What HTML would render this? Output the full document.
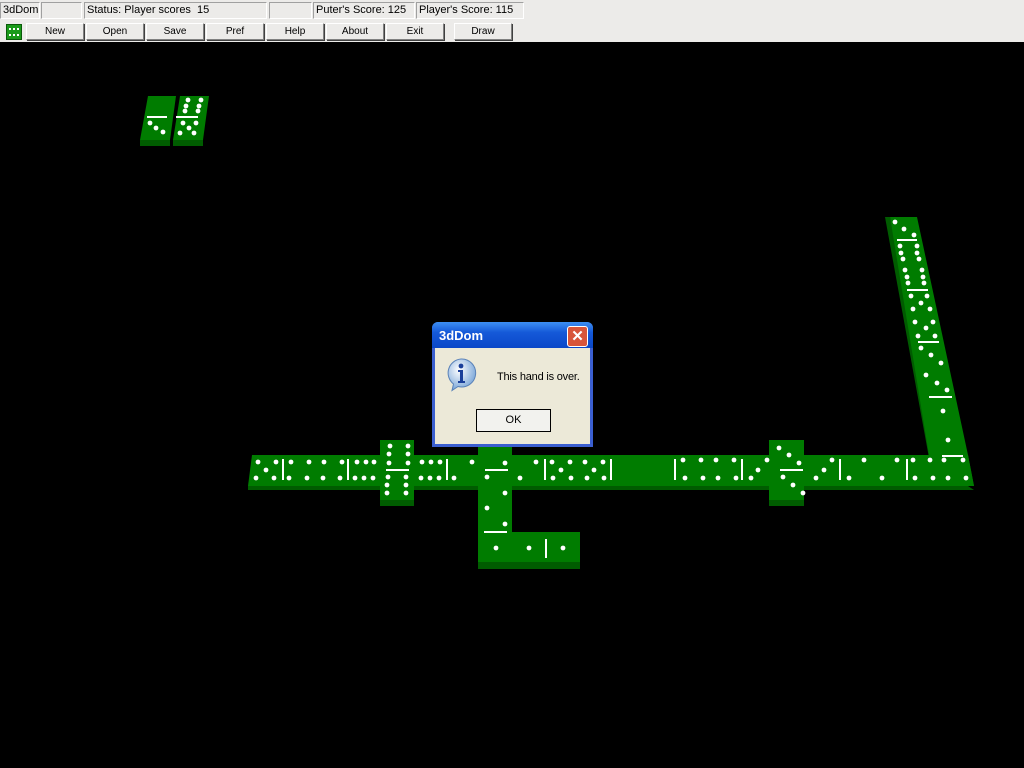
<!DOCTYPE html>
<html><head><meta charset="utf-8"><style>
*{margin:0;padding:0;box-sizing:border-box}
body{width:1024px;height:768px;background:#000;position:relative;overflow:hidden;font-family:"Liberation Sans",sans-serif;font-size:11px}
#top{position:absolute;left:0;top:0;width:1024px;height:42px;background:#ecebe9}
.f{position:absolute;top:2px;height:17px;border:1px solid #fff;border-top-color:#a0a0a0;border-left-color:#a0a0a0;line-height:15px;padding-left:2px;color:#000;white-space:nowrap}
.b{position:absolute;top:23px;height:17px;width:58px;background:#ecebe9;border:1px solid #fff;border-right-color:#808080;border-bottom-color:#808080;box-shadow:1px 1px 0 #404040;text-align:center;line-height:15px;font-size:10px}
#dlg{position:absolute;left:432px;top:322px;width:161px;height:125px;background:#3b5fd0;border-radius:6px 6px 0 0}
#dlg .t{position:absolute;left:0;top:0;width:161px;height:26px;background:linear-gradient(#3d8ff2,#1559d8 40%,#0a47c8);border-radius:6px 6px 0 0;color:#fff;font-weight:bold;font-size:13px;line-height:28px;padding-left:7px}
#dlg .x{position:absolute;right:5px;top:4px;width:21px;height:21px;background:#d8553a;border:1px solid #fff;border-radius:3px;color:#fff;text-align:center;line-height:19px;font-size:15px;font-weight:bold}
#dlg .c{position:absolute;left:3px;top:26px;width:155px;height:96px;background:#ece9d8}
#dlg .m{position:absolute;left:62px;top:23px;font-size:11px;letter-spacing:-0.2px}
#dlg .ok{position:absolute;left:41px;top:61px;width:75px;height:23px;border:1px solid #000;background:#f2f2ee;text-align:center;line-height:21px;font-size:11px}
svg circle{r:2.4px}
</style></head><body>
<div id="top">
<div class="f" style="left:0;width:40px">3dDom</div>
<div class="f" style="left:41px;width:41px"></div>
<div class="f" style="left:84px;width:183px">Status: Player scores&nbsp; 15</div>
<div class="f" style="left:269px;width:43px"></div>
<div class="f" style="left:313px;width:102px">Puter's Score: 125</div>
<div class="f" style="left:416px;width:108px">Player's Score: 115</div>
<div style="position:absolute;left:6px;top:24px;width:16px;height:16px;background:#1a9a1a;border:1px solid #0a5a0a">
<svg width="14" height="14" style="display:block"><g fill="#fff"><rect x="2" y="3" width="2" height="2"/><rect x="6" y="3" width="2" height="2"/><rect x="10" y="3" width="2" height="2"/><rect x="2" y="9" width="2" height="2"/><rect x="6" y="9" width="2" height="2"/><rect x="10" y="9" width="2" height="2"/></g></svg></div>
<div class="b" style="left:26px">New</div>
<div class="b" style="left:86px">Open</div>
<div class="b" style="left:146px">Save</div>
<div class="b" style="left:206px">Pref</div>
<div class="b" style="left:266px">Help</div>
<div class="b" style="left:326px">About</div>
<div class="b" style="left:386px">Exit</div>
<div class="b" style="left:454px">Draw</div>
</div>
<svg width="1024" height="768" style="position:absolute;left:0;top:0">
<g fill="#005c00">
<polygon points="140,140 170,140 170,146 140,146"/>
<polygon points="173,140 203,140 203,146 173,146"/>
<polygon points="248,486 968,486 974,490 248,490"/>
<polygon points="885,217 890,217 933,455 929,458"/>
<polygon points="380,500 414,500 414,506 380,506"/>
<polygon points="769,500 804,500 804,506 769,506"/>
<polygon points="478,562 580,562 580,569 478,569"/>
</g>
<g fill="#007c00">
<polygon points="148,96 176,96 170,140 140,140"/>
<polygon points="180,96 209,96 203,140 173,140"/>
<polygon points="252,455 968,455 974,486 248,486"/>
<polygon points="890,217 917,217 968,455 974,486 930,486 929,455"/>
<rect x="380" y="440" width="34" height="60"/>
<rect x="769" y="440" width="35" height="60"/>
<rect x="478" y="446" width="34" height="116"/>
<rect x="478" y="532" width="102" height="30"/>
</g>
<g fill="#fff">
<rect x="147" y="116" width="20" height="2"/><rect x="176" y="116" width="22" height="2"/>
<rect x="282" y="459" width="2" height="21"/><rect x="347" y="459" width="2" height="21"/>
<rect x="446" y="459" width="2" height="21"/><rect x="544" y="459" width="2" height="21"/><rect x="610" y="459" width="2" height="21"/>
<rect x="674" y="459" width="2" height="21"/><rect x="741" y="459" width="2" height="21"/><rect x="839" y="459" width="2" height="21"/><rect x="906" y="459" width="2" height="21"/>
<rect x="386" y="469" width="23" height="2"/><rect x="780" y="469" width="23" height="2"/>
<rect x="485" y="469" width="23" height="2"/><rect x="484" y="531" width="23" height="2"/>
<rect x="545" y="539" width="2" height="19"/>
<rect x="897" y="239" width="20" height="2"/><rect x="907" y="289" width="21" height="2"/><rect x="918" y="341" width="21" height="2"/><rect x="929" y="396" width="23" height="2"/><rect x="942" y="455" width="21" height="2"/>
</g>
<g fill="#fff">
<circle cx="150" cy="123" r="2"/><circle cx="156" cy="128" r="2"/><circle cx="163" cy="132" r="2"/>
<circle cx="188" cy="100" r="2"/><circle cx="201" cy="100" r="2"/><circle cx="186" cy="106" r="2"/><circle cx="199" cy="106" r="2"/><circle cx="185" cy="111" r="2"/><circle cx="198" cy="111" r="2"/>
<circle cx="183" cy="123" r="2"/><circle cx="196" cy="123" r="2"/><circle cx="189" cy="128" r="2"/><circle cx="180" cy="133" r="2"/><circle cx="194" cy="133" r="2"/>
<circle cx="258" cy="462" r="2"/><circle cx="276" cy="462" r="2"/><circle cx="291" cy="462" r="2"/><circle cx="309" cy="462" r="2"/><circle cx="324" cy="462" r="2"/><circle cx="342" cy="462" r="2"/><circle cx="357" cy="462" r="2"/><circle cx="366" cy="462" r="2"/><circle cx="374" cy="462" r="2"/>
<circle cx="256" cy="478" r="2"/><circle cx="274" cy="478" r="2"/><circle cx="289" cy="478" r="2"/><circle cx="307" cy="478" r="2"/><circle cx="323" cy="478" r="2"/><circle cx="340" cy="478" r="2"/><circle cx="355" cy="478" r="2"/><circle cx="364" cy="478" r="2"/><circle cx="373" cy="478" r="2"/><circle cx="266" cy="470" r="2"/>
<circle cx="422" cy="462" r="2"/><circle cx="431" cy="462" r="2"/><circle cx="440" cy="462" r="2"/><circle cx="472" cy="462" r="2"/>
<circle cx="421" cy="478" r="2"/><circle cx="430" cy="478" r="2"/><circle cx="439" cy="478" r="2"/><circle cx="454" cy="478" r="2"/>
<circle cx="536" cy="462" r="2"/><circle cx="552" cy="462" r="2"/><circle cx="570" cy="462" r="2"/><circle cx="585" cy="462" r="2"/><circle cx="603" cy="462" r="2"/>
<circle cx="561" cy="470" r="2"/><circle cx="594" cy="470" r="2"/>
<circle cx="520" cy="478" r="2"/><circle cx="553" cy="478" r="2"/><circle cx="571" cy="478" r="2"/><circle cx="587" cy="478" r="2"/><circle cx="604" cy="478" r="2"/>
<circle cx="683" cy="460" r="2"/><circle cx="701" cy="460" r="2"/><circle cx="716" cy="460" r="2"/><circle cx="734" cy="460" r="2"/><circle cx="767" cy="460" r="2"/><circle cx="832" cy="460" r="2"/><circle cx="864" cy="460" r="2"/><circle cx="897" cy="460" r="2"/><circle cx="913" cy="460" r="2"/><circle cx="930" cy="460" r="2"/><circle cx="944" cy="460" r="2"/><circle cx="963" cy="460" r="2"/>
<circle cx="685" cy="478" r="2"/><circle cx="703" cy="478" r="2"/><circle cx="718" cy="478" r="2"/><circle cx="736" cy="478" r="2"/><circle cx="751" cy="478" r="2"/><circle cx="816" cy="478" r="2"/><circle cx="849" cy="478" r="2"/><circle cx="882" cy="478" r="2"/><circle cx="915" cy="478" r="2"/><circle cx="933" cy="478" r="2"/><circle cx="948" cy="478" r="2"/><circle cx="966" cy="478" r="2"/>
<circle cx="758" cy="470" r="2"/><circle cx="824" cy="470" r="2"/>
<circle cx="779" cy="448" r="2"/><circle cx="789" cy="455" r="2"/><circle cx="799" cy="463" r="2"/><circle cx="783" cy="477" r="2"/><circle cx="793" cy="485" r="2"/><circle cx="803" cy="493" r="2"/>
<circle cx="390" cy="446" r="2"/><circle cx="408" cy="446" r="2"/><circle cx="389" cy="454" r="2"/><circle cx="408" cy="454" r="2"/><circle cx="389" cy="463" r="2"/><circle cx="408" cy="463" r="2"/>
<circle cx="388" cy="477" r="2"/><circle cx="406" cy="477" r="2"/><circle cx="387" cy="485" r="2"/><circle cx="406" cy="485" r="2"/><circle cx="387" cy="493" r="2"/><circle cx="406" cy="493" r="2"/>
<circle cx="505" cy="463" r="2"/><circle cx="487" cy="477" r="2"/><circle cx="505" cy="493" r="2"/><circle cx="487" cy="508" r="2"/><circle cx="505" cy="524" r="2"/>
<circle cx="496" cy="548" r="2"/><circle cx="529" cy="548" r="2"/><circle cx="563" cy="548" r="2"/>
<circle cx="895" cy="222" r="2"/><circle cx="904" cy="229" r="2"/><circle cx="914" cy="235" r="2"/>
<circle cx="900" cy="246" r="2"/><circle cx="917" cy="246" r="2"/><circle cx="901" cy="253" r="2"/><circle cx="917" cy="253" r="2"/><circle cx="903" cy="259" r="2"/><circle cx="919" cy="259" r="2"/>
<circle cx="905" cy="270" r="2"/><circle cx="922" cy="270" r="2"/><circle cx="907" cy="277" r="2"/><circle cx="923" cy="277" r="2"/><circle cx="908" cy="283" r="2"/><circle cx="924" cy="283" r="2"/>
<circle cx="911" cy="296" r="2"/><circle cx="927" cy="296" r="2"/><circle cx="921" cy="303" r="2"/><circle cx="913" cy="309" r="2"/><circle cx="930" cy="309" r="2"/>
<circle cx="915" cy="322" r="2"/><circle cx="933" cy="322" r="2"/><circle cx="926" cy="328" r="2"/><circle cx="918" cy="336" r="2"/><circle cx="935" cy="336" r="2"/>
<circle cx="921" cy="348" r="2"/><circle cx="931" cy="355" r="2"/><circle cx="941" cy="363" r="2"/><circle cx="926" cy="375" r="2"/><circle cx="937" cy="383" r="2"/><circle cx="947" cy="390" r="2"/>
<circle cx="943" cy="411" r="2"/><circle cx="948" cy="440" r="2"/>
</g>
</svg>
<div id="dlg"><div class="t">3dDom</div><div class="x">✕</div>
<div class="c">
<svg width="40" height="40" style="position:absolute;left:10px;top:9px"><defs><radialGradient id="g" cx="40%" cy="35%" r="65%"><stop offset="0" stop-color="#fff"/><stop offset="1" stop-color="#7aa6d8"/></radialGradient></defs><path d="M16 2a14 14 0 1 1 -3 27.5l-6 4 1.5-6.5A14 14 0 0 1 16 2z" fill="url(#g)" stroke="#5a82b8"/><circle cx="16" cy="9" r="2.3" fill="#1a3f9a"/><path d="M13 13h5v11h2v2h-7v-2h2v-9h-2z" fill="#1a3f9a"/></svg>
<div class="m">This hand is over.</div>
<div class="ok">OK</div></div></div>
</body></html>
